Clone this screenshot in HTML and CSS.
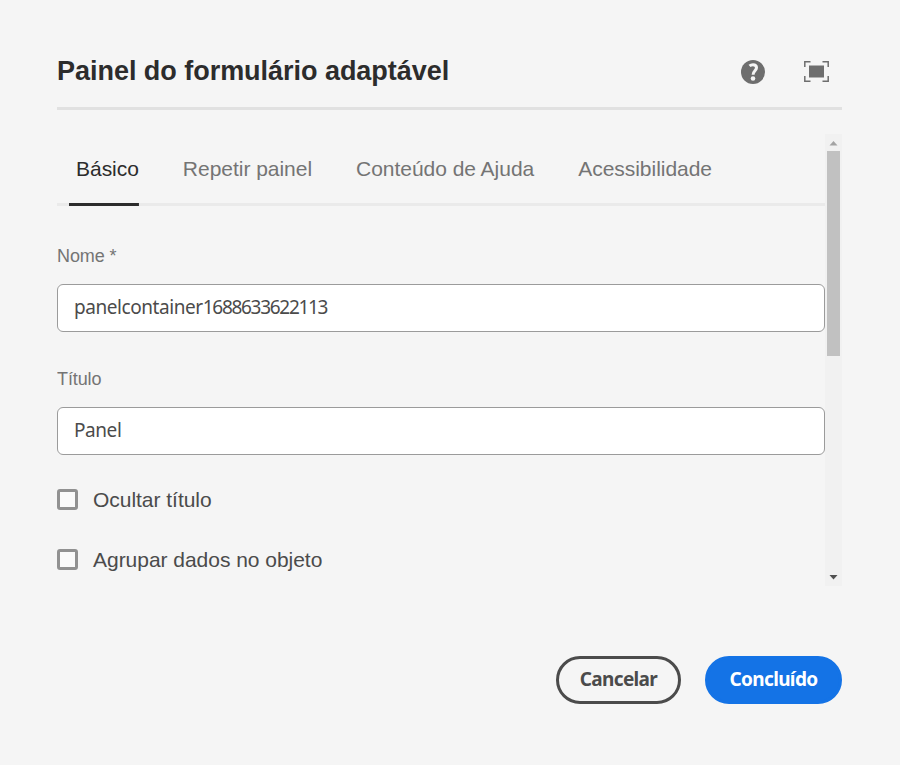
FILE: index.html
```html
<!DOCTYPE html>
<html lang="pt-BR">
<head>
<meta charset="utf-8">
<title>Painel do formulário adaptável</title>
<link rel="stylesheet" href="styles.css">
</head>
<body>
<main class="dialog">
  <header class="header">
    <h1 class="title">Painel do formulário adaptável</h1>
    <div class="tools">
      <svg class="icon-help" viewBox="0 0 24 24" aria-label="Ajuda"><circle cx="12" cy="12" r="12" fill="#6e6e6e"/><path d="M8.500 5.900C9.600 5 10.800 4.700 12 4.700c2.200 0 3.500 1.200 3.500 3.100 0 2.900-3.500 3.200-3.400 7" fill="none" stroke="#f5f5f5" stroke-width="3"/><circle cx="12" cy="18.500" r="2.300" fill="#f5f5f5"/></svg>
      <svg class="icon-full" viewBox="0 0 25 21" aria-label="Tela cheia"><path d="M.8 6V.8H6.500M18.500.8h5.700V6M24.200 15v5.200h-5.700M6.500 20.200H.8V15" fill="none" stroke="#6e6e6e" stroke-width="1.500"/><path d="M5 4.500h15v12H5z" fill="#6e6e6e"/></svg>
    </div>
  </header>
  <div class="scroller">
    <div class="content">
      <nav class="tabs">
        <a class="tab tab-active">Básico</a>
        <a class="tab">Repetir painel</a>
        <a class="tab">Conteúdo de Ajuda</a>
        <a class="tab">Acessibilidade</a>
      </nav>
      <div class="field">
        <label class="label">Nome *</label>
        <div class="input">panelcontainer<span class="digits">1688633622113</span></div>
      </div>
      <div class="field">
        <label class="label">Título</label>
        <div class="input">Panel</div>
      </div>
      <div class="check"><span class="box"></span><span class="check-text">Ocultar título</span></div>
      <div class="check"><span class="box"></span><span class="check-text">Agrupar dados no objeto</span></div>
    </div>
    <div class="scrollbar">
      <svg class="arrow" viewBox="0 0 17 17"><path d="M4.500 11.500L8.500 7l4 4.500z" fill="#a3a3a3"/></svg>
      <div class="thumb"></div>
      <svg class="arrow arrow-down" viewBox="0 0 17 17"><path d="M4.500 6l4 4.500 4-4.500z" fill="#505050"/></svg>
    </div>
  </div>
  <footer class="footer">
    <button class="button cancel">Cancelar</button>
    <button class="button done">Concluído</button>
  </footer>
</main>
</body>
</html>
```
FILE: styles.css
```css
* { box-sizing: border-box; }
body { margin: 0; background: #f5f5f5; font-family: "Liberation Sans", Arial, sans-serif; }
.dialog { width: 900px; height: 765px; padding: 48px 58px 0 57px; }
.header { height: 62px; display: flex; justify-content: space-between; border-bottom: 3px solid #e1e1e1; }
.title { margin: 0; font-size: 27px; line-height: 46px; color: #2c2c2c; letter-spacing: -0.03px; white-space: nowrap; }
.tools { display: flex; align-items: center; height: 47px; gap: 39px; padding-right: 13px; }
.icon-help { width: 24px; height: 24px; }
.icon-full { width: 25px; height: 21px; }
.scroller { display: flex; height: 452px; margin-top: 24px; overflow: hidden; }
.content { width: 768px; }
.tabs { display: flex; height: 72px; padding-left: 12px; gap: 37px; border-bottom: 3px solid #eaeaea; }
.tab { height: 72px; padding-left: 7px; line-height: 70px; font-size: 21px; color: #747474; white-space: nowrap; letter-spacing: -0.03px; }
.tab-active { color: #2c2c2c; background: linear-gradient(#2c2c2c, #2c2c2c) bottom / 100% 3px no-repeat; }
.field { height: 123px; padding-top: 33px; }
.label { display: block; height: 45px; line-height: 34px; font-size: 18px; letter-spacing: -0.1px; color: #747474; }
.input { height: 48px; border: 1px solid #9b9b9b; border-radius: 6px; background: #fff; padding-left: 16px; font: 19px/45px "Noto Sans", sans-serif; letter-spacing: -0.43px; color: #4b4b4b; }
.digits { letter-spacing: -1.3px; }
.check { height: 60px; display: flex; align-items: center; gap: 15px; font-size: 21px; letter-spacing: -0.03px; color: #4b4b4b; }
.check-text { padding-top: 2px; }
.field + .check { margin-top: 17px; }
.box { width: 21px; height: 21px; border: 3px solid #919191; border-radius: 3px; background: #fafafa; }
.scrollbar { width: 17px; background: #f1f1f1; display: flex; flex-direction: column; }
.arrow { width: 17px; height: 17px; display: block; }
.thumb { width: 13px; height: 205px; margin-left: 2px; background: #c1c1c1; }
.arrow-down { margin-top: auto; }
.footer { display: flex; justify-content: flex-end; gap: 24px; margin-top: 70px; }
.button { height: 48px; border-radius: 24px; padding: 0 0 2px; font: bold 19px/40px "Noto Sans", sans-serif; letter-spacing: -0.65px; }
.cancel { width: 125px; border: 3px solid #4b4b4b; background: transparent; color: #4b4b4b; }
.done { width: 137px; border: 3px solid #1473e6; background: #1473e6; color: #fff; }
```
